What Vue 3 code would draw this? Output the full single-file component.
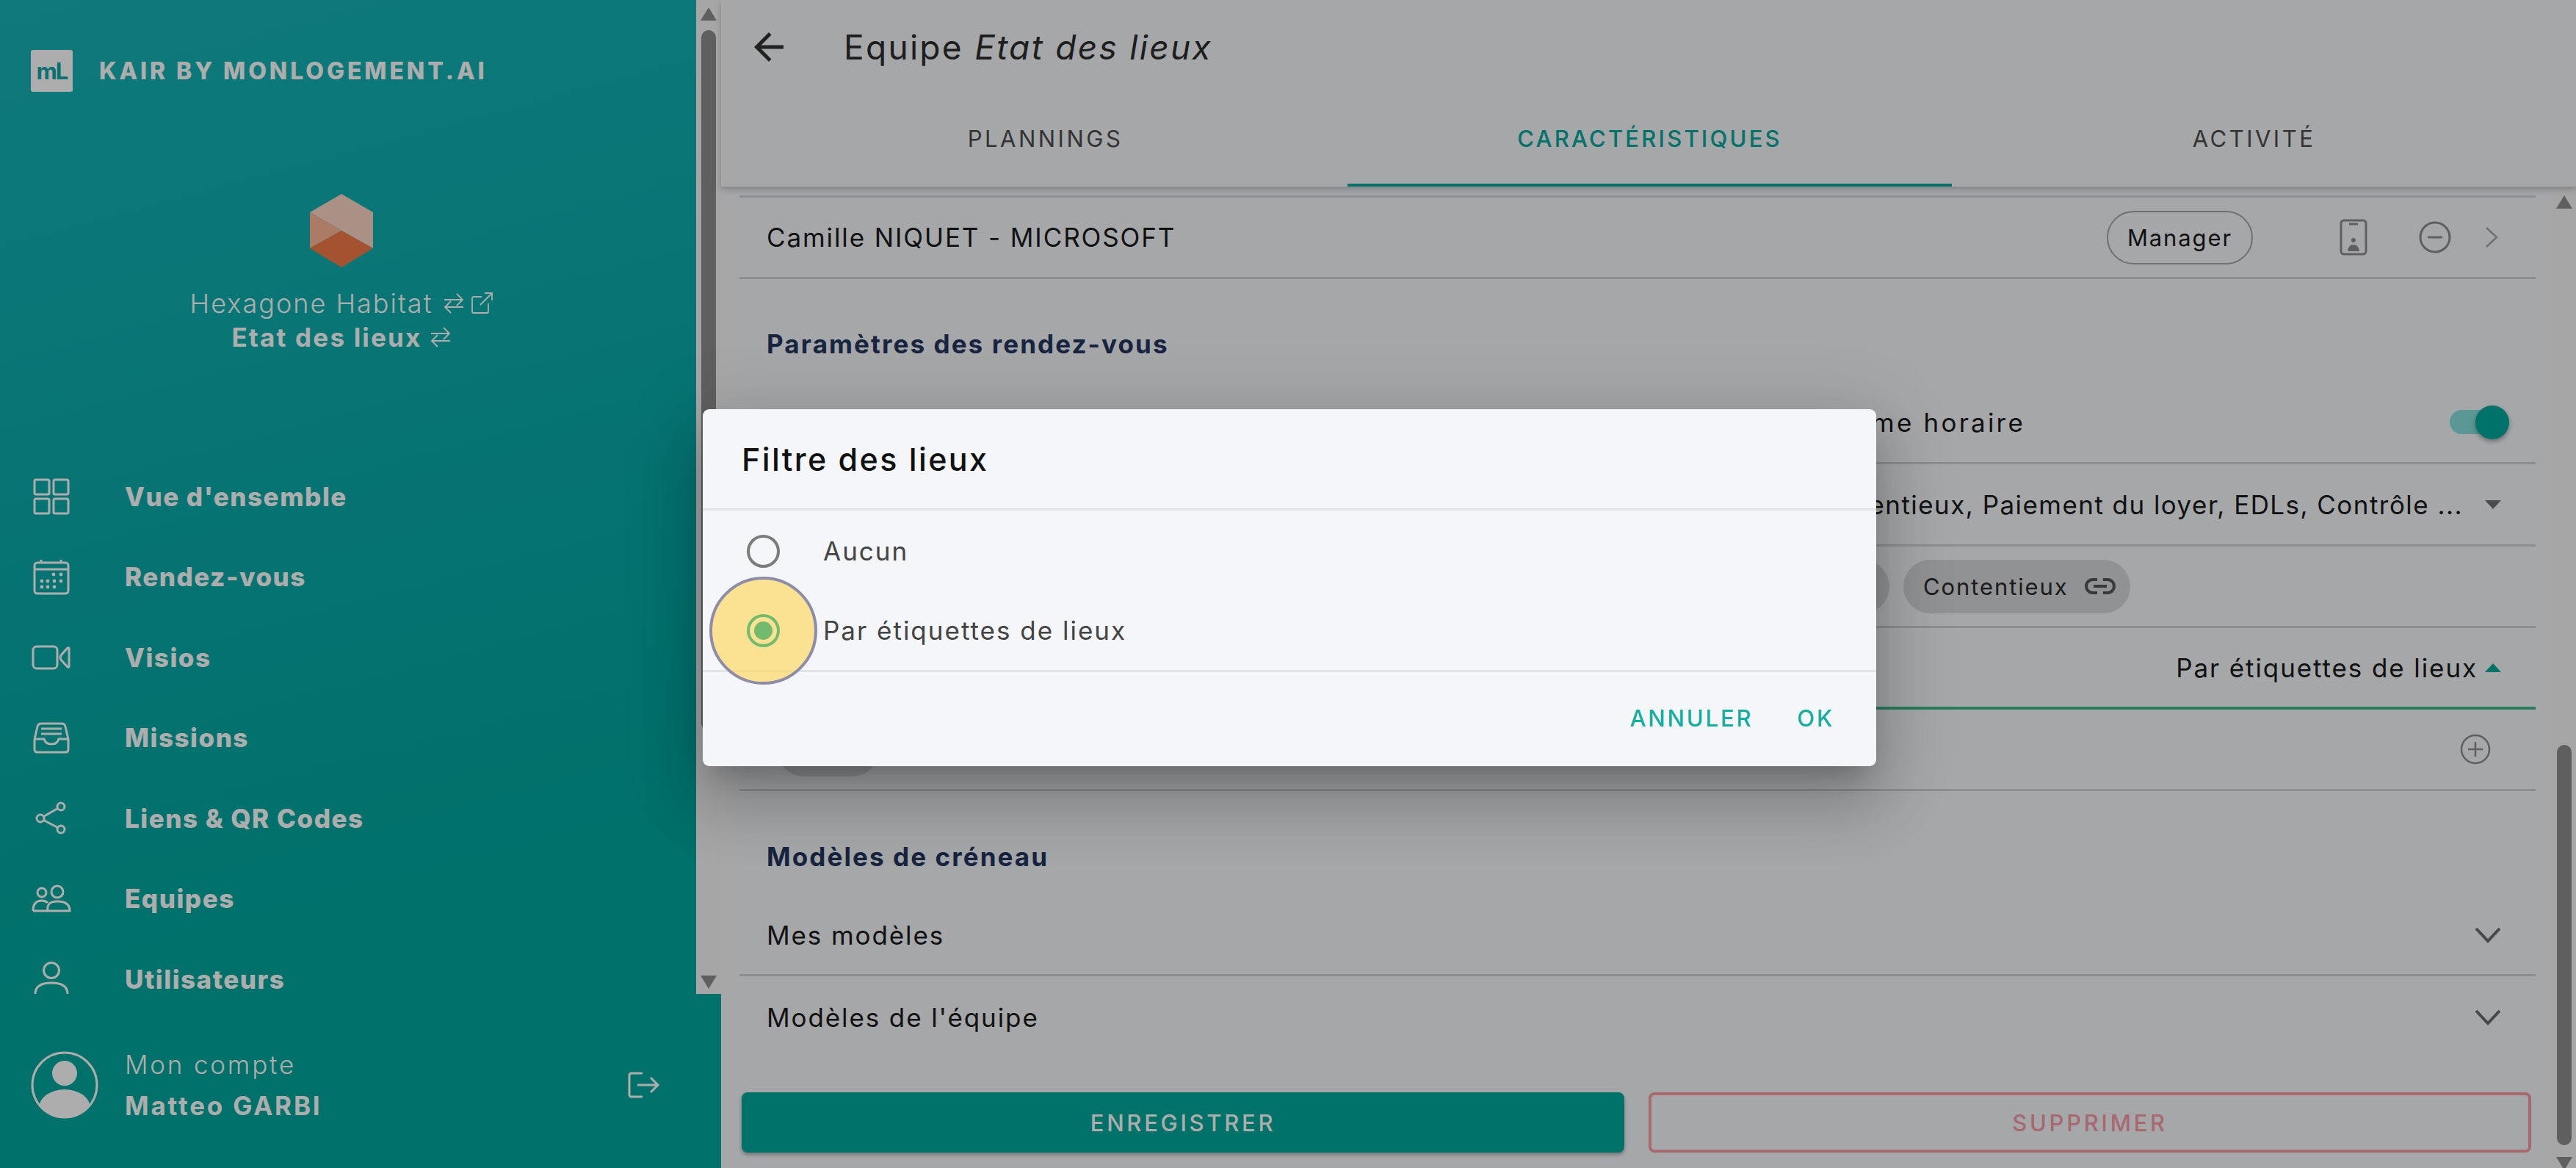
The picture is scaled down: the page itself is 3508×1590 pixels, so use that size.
<script setup>
const navItems = [
  { label: "Vue d'ensemble", icon: "grid" },
  { label: "Rendez-vous", icon: "calendar" },
  { label: "Visios", icon: "video" },
  { label: "Missions", icon: "inbox" },
  { label: "Liens & QR Codes", icon: "share" },
  { label: "Equipes", icon: "team" },
  { label: "Utilisateurs", icon: "user" }
];

const tabs = ["PLANNINGS", "CARACTÉRISTIQUES", "ACTIVITÉ"];

const calendarDots = [
  [31, 25], [41, 25],
  [15, 34], [23, 34], [32, 34], [41, 34],
  [15, 42], [23, 42], [32, 42]
];
</script>

<template>
  <div class="app">
    <aside class="sidebar">
      <div class="side-top">
        <div class="side-content">
          <div class="brand">
            <div class="brand-logo">mL</div>
            <div class="brand-name">KAIR BY MONLOGEMENT.AI</div>
          </div>

          <svg class="hexagon" width="88" height="100" viewBox="0 0 88 100">
            <polygon points="44,0 87,25 87,74 44,50 1,25" fill="#fdd5c5" />
            <polygon points="1,25 44,50 1,74" fill="#fdb697" />
            <polygon points="44,50 87,74 44,100 1,74" fill="#f47a47" />
          </svg>

          <div class="org">
            Hexagone Habitat
            <svg class="swap" width="30" height="30" viewBox="0 0 30 30">
              <path d="M2 10H27M19 2L27 10L19 18M28 20H3M11 12L3 20L11 28" />
            </svg>
            <svg class="swap ext" width="30" height="30" viewBox="0 0 30 30">
              <path d="M15 6H4A2 2 0 0 0 2 8V26A2 2 0 0 0 4 28H22A2 2 0 0 0 24 26V15M13 17L29 1M19 1H29V11" />
            </svg>
          </div>
          <div class="team">
            Etat des lieux
            <svg class="swap" width="30" height="30" viewBox="0 0 30 30">
              <path d="M2 10H27M19 2L27 10L19 18M28 20H3M11 12L3 20L11 28" />
            </svg>
          </div>

          <nav class="nav">
            <div v-for="item in navItems" :key="item.label" class="nav-item">
              <svg class="nav-icon" width="56" height="56" viewBox="0 0 56 56">
                <template v-if="item.icon === 'grid'">
                  <rect x="5" y="5" width="20" height="20" rx="2" />
                  <rect x="31" y="5" width="20" height="20" rx="2" />
                  <rect x="5" y="31" width="20" height="20" rx="2" />
                  <rect x="31" y="31" width="20" height="20" rx="2" />
                </template>
                <template v-else-if="item.icon === 'calendar'">
                  <rect x="5" y="9" width="46" height="42" rx="4" />
                  <path d="M5 18H51M14 5V10M41 5V10" />
                  <circle v-for="d in calendarDots" :key="d.join()" :cx="d[0]" :cy="d[1]" r="2.4" class="dot" />
                </template>
                <template v-else-if="item.icon === 'video'">
                  <rect x="3" y="13" width="33" height="30" rx="5" />
                  <path d="M52 16V40Q52 42 50 41L41 31Q39 28 41 25L50 15Q52 14 52 16Z" />
                </template>
                <template v-else-if="item.icon === 'inbox'">
                  <path d="M5 30V44Q5 48 9 48H47Q51 48 51 44V30M5 30H18Q20 37 28 37Q36 37 38 30H51M5 30L9 13Q10 9 14 9H42Q46 9 47 13L51 30" />
                  <path d="M14 16H42M14 23H42" />
                </template>
                <template v-else-if="item.icon === 'share'">
                  <circle cx="13" cy="28" r="5" />
                  <circle cx="41" cy="12" r="5" />
                  <circle cx="41" cy="43" r="5" />
                  <path d="M17.5 25.5L36.5 14.5M17.5 30.5L36.5 40.5" />
                </template>
                <template v-else-if="item.icon === 'team'">
                  <circle cx="15" cy="20" r="6" />
                  <circle cx="36" cy="19" r="8" />
                  <path d="M3 45Q3 31 15 31Q20 31 23 34M23 45Q21 32 36 32Q53 32 53 45Z" />
                  <path d="M3 45H23" />
                </template>
                <template v-else>
                  <circle cx="28" cy="16" r="10.5" />
                  <path d="M6 48Q6 33 28 33Q50 33 50 48" />
                </template>
              </svg>
              <span>{{ item.label }}</span>
            </div>
          </nav>
        </div>

        <div class="scrollbar side-scroll">
          <div class="arrow-up"></div>
          <div class="thumb side-thumb"></div>
          <div class="spacer"></div>
          <div class="arrow-down"></div>
        </div>
      </div>

      <div class="account">
        <svg class="avatar" width="92" height="92" viewBox="0 0 92 92">
          <defs>
            <clipPath id="avatar-clip"><circle cx="46" cy="46" r="44" /></clipPath>
          </defs>
          <circle cx="46" cy="46" r="44" class="avatar-ring" />
          <circle cx="46" cy="30" r="17" class="avatar-fill" />
          <ellipse cx="46" cy="77" rx="35" ry="25" class="avatar-fill" clip-path="url(#avatar-clip)" />
        </svg>
        <div class="account-text">
          <div class="account-label">Mon compte</div>
          <div class="account-name">Matteo GARBI</div>
        </div>
        <svg class="logout" width="44" height="36" viewBox="0 0 44 36">
          <path d="M20 2H5Q2 2 2 5V31Q2 34 5 34H20M13 18H41M31 8L41 18L31 28" />
        </svg>
      </div>
    </aside>

    <main class="main">
      <header class="header">
        <div class="title-row">
          <svg class="back" width="60" height="60" viewBox="0 0 24 24">
            <path d="M20 11H7.83l5.59-5.59L12 4l-8 8 8 8 1.41-1.41L7.83 13H20v-2z" />
          </svg>
          <h1 class="title">Equipe <em>Etat des lieux</em></h1>
        </div>
        <div class="tabs">
          <div v-for="tab in tabs" :key="tab" class="tab" :class="{ active: tab === 'CARACTÉRISTIQUES' }">{{ tab }}</div>
        </div>
      </header>

      <div class="body">
        <div class="content">
          <div class="row first">
            <span>Camille NIQUET - MICROSOFT</span>
            <span class="role">Manager</span>
            <svg class="phone" width="38" height="50" viewBox="0 0 38 50">
              <rect x="2" y="2" width="34" height="46" rx="4" />
              <path d="M13 7H25" />
              <circle cx="19" cy="29" r="3" class="solid" />
              <path d="M11 44Q12 35 19 35Q26 35 27 44Z" class="solid" />
            </svg>
            <svg class="minus" width="44" height="44" viewBox="0 0 44 44">
              <circle cx="22" cy="22" r="20" />
              <path d="M12 22H32" />
            </svg>
            <svg class="chev-right" width="20" height="30" viewBox="0 0 20 30">
              <path d="M3 2L17 15L3 28" />
            </svg>
          </div>

          <h2 class="section first-section">Paramètres des rendez-vous</h2>

          <div class="row tall">
            <span class="hour-label">Forme horaire</span>
            <div class="toggle"><div class="toggle-thumb"></div></div>
          </div>

          <div class="row tall right">
            <span>Contentieux, Paiement du loyer, EDLs, Contrôle ...</span>
            <span class="caret-down"></span>
          </div>

          <div class="row chips">
            <span class="chip stub"></span>
            <span class="chip">
              Contentieux
              <svg width="44" height="24" viewBox="0 0 44 24">
                <path d="M18 3H12A9 9 0 0 0 12 21H18M26 3H32A9 9 0 0 1 32 21H26M13 12H31" />
              </svg>
            </span>
          </div>

          <div class="row filter">
            <span>Filtre des lieux</span>
            <span class="filter-value">Par étiquettes de lieux</span>
            <span class="caret-up"></span>
          </div>

          <div class="row tags">
            <span class="chip tag-stub"></span>
            <svg class="plus" width="42" height="42" viewBox="0 0 42 42">
              <circle cx="21" cy="21" r="19" />
              <path d="M21 11V31M11 21H31" />
            </svg>
          </div>

          <h2 class="section second-section">Modèles de créneau</h2>

          <div class="row model">
            <span>Mes modèles</span>
            <svg class="chev-down" width="38" height="24" viewBox="0 0 38 24">
              <path d="M3 3L19 20L35 3" />
            </svg>
          </div>
          <div class="row model last">
            <span>Modèles de l'équipe</span>
            <svg class="chev-down" width="38" height="24" viewBox="0 0 38 24">
              <path d="M3 3L19 20L35 3" />
            </svg>
          </div>

          <div class="actions">
            <button class="btn save">ENREGISTRER</button>
            <button class="btn delete">SUPPRIMER</button>
          </div>
        </div>

        <div class="scrollbar main-scroll">
          <div class="arrow-up"></div>
          <div class="spacer main-gap"></div>
          <div class="thumb main-thumb"></div>
          <div class="arrow-down"></div>
        </div>
      </div>
    </main>

    <div class="overlay">
      <div class="dialog">
        <div class="dialog-title">Filtre des lieux</div>
        <div class="dialog-body">
          <div class="option">
            <span class="radio-slot"><span class="radio"></span></span>
            <span>Aucun</span>
          </div>
          <div class="option">
            <span class="radio-slot">
              <span class="highlight"><span class="radio checked"><span class="radio-dot"></span></span></span>
            </span>
            <span>Par étiquettes de lieux</span>
          </div>
        </div>
        <div class="dialog-actions">
          <span>ANNULER</span>
          <span>OK</span>
        </div>
      </div>
    </div>
  </div>
</template>

<style scoped>
.app {
  position: relative;
  display: flex;
  width: 3508px;
  height: 1590px;
  overflow: hidden;
  background: #f4f6fa;
  font-family: Inter, "Liberation Sans", sans-serif;
  font-size: 35px;
  letter-spacing: 1.9px;
  color: #1a1a1a;
}

/* sidebar */
.sidebar {
  width: 982px;
  flex: none;
  display: flex;
  flex-direction: column;
  background: linear-gradient(165deg, #17b3b7 0%, #09aaa8 45%, #00a69d 75%);
  color: #fff;
}

.side-top {
  display: flex;
  height: 1353px;
  flex: none;
}

.side-content {
  flex: 1;
  display: flex;
  flex-direction: column;
  align-items: center;
}

.side-content > * {
  flex: none;
}

.brand {
  align-self: flex-start;
  display: flex;
  align-items: center;
  gap: 36px;
  height: 57px;
  margin: 68px 0 0 42px;
}

.brand-logo {
  width: 57px;
  height: 57px;
  border-radius: 3px;
  background: #fff;
  color: #10a5a8;
  font-weight: 700;
  font-size: 31px;
  letter-spacing: -2px;
  display: flex;
  align-items: center;
  justify-content: center;
}

.brand-name {
  font-weight: 800;
  font-size: 32px;
  letter-spacing: 3.9px;
}

.hexagon {
  margin: 139px 0 0 -18px;
}

.org {
  display: flex;
  align-items: center;
  margin-top: 27px;
  padding-right: 18px;
  height: 44px;
  font-size: 36px;
  font-weight: 300;
  letter-spacing: 2px;
}

.team {
  display: flex;
  align-items: center;
  padding-right: 18px;
  height: 48px;
  font-size: 35px;
  font-weight: 700;
  letter-spacing: 2.2px;
}

.swap {
  margin-left: 14px;
  fill: none;
  stroke: #fff;
  stroke-width: 1.8;
}

.swap.ext {
  margin-left: 8px;
}

.team .swap {
  margin-left: 10px;
}

.nav {
  align-self: stretch;
  margin-top: 138px;
  display: flex;
  flex-direction: column;
}

.nav-item {
  flex: none;
  display: flex;
  align-items: center;
  height: 109.5px;
  padding-left: 42px;
  gap: 72px;
  font-weight: 800;
  font-size: 35px;
  letter-spacing: 1.5px;
}

.nav-icon {
  flex: none;
  fill: none;
  stroke: #fff;
  stroke-width: 3;
}

.nav-icon .dot {
  fill: #fff;
  stroke: none;
}

.account {
  flex: 1;
  display: flex;
  align-items: center;
  padding: 11px 83px 0 42px;
  gap: 36px;
  letter-spacing: 2.8px;
}

.avatar-ring {
  fill: none;
  stroke: #fff;
  stroke-width: 3;
}

.avatar-fill {
  fill: #fff;
}

.account-label {
  font-weight: 300;
  line-height: 56px;
}

.account-name {
  font-weight: 700;
  line-height: 56px;
}

.logout {
  margin-left: auto;
  fill: none;
  stroke: #fff;
  stroke-width: 3;
}

/* scrollbars */
.scrollbar {
  flex: none;
  width: 34px;
  display: flex;
  flex-direction: column;
  align-items: center;
  background: #f5f5f5;
}

.side-scroll {
  padding: 10px 0 7px;
}

.arrow-up,
.arrow-down {
  width: 0;
  height: 0;
  flex: none;
  border-left: 11px solid transparent;
  border-right: 11px solid transparent;
}

.arrow-up {
  border-bottom: 18px solid #8c8c8c;
}

.arrow-down {
  border-top: 18px solid #8c8c8c;
}

.thumb {
  width: 20px;
  flex: none;
  border-radius: 10px;
  background: #8c8c8c;
}

.side-thumb {
  height: 954px;
  margin-top: 13px;
}

.spacer {
  flex: 1;
}

/* main column */
.main {
  flex: 1;
  display: flex;
  flex-direction: column;
  min-width: 0;
}

.header {
  position: relative;
  z-index: 1;
  flex: none;
  box-sizing: border-box;
  height: 255px;
  border-bottom: 1px solid #d4d4d8;
  box-shadow: 0 3px 8px rgba(0, 0, 0, 0.22);
  background: #f4f6fa;
}

.title-row {
  display: flex;
  align-items: center;
  height: 127px;
  padding-left: 35px;
  gap: 72px;
}

.back {
  fill: #333;
}

.title {
  margin: 0;
  font-size: 46px;
  font-weight: 400;
  letter-spacing: 2.3px;
  color: #2d2d2d;
}

.tabs {
  display: flex;
  margin-left: 30px;
  height: 127px;
}

.tab {
  width: 823px;
  display: flex;
  align-items: center;
  justify-content: center;
  font-size: 31px;
  letter-spacing: 3.5px;
  color: #4c4c4c;
  border-bottom: 4px solid transparent;
  box-sizing: border-box;
}

.tab.active {
  color: #00a99d;
  font-weight: 500;
  letter-spacing: 3.2px;
  border-bottom-color: #00a99d;
}

.body {
  flex: 1;
  display: flex;
  min-height: 0;
}

.content {
  flex: 1;
  min-width: 0;
  padding-top: 11px;
}

.row {
  display: flex;
  align-items: center;
  box-sizing: border-box;
  height: 111px;
  margin: 0 22px 0 25px;
  padding-left: 37px;
  border-bottom: 3px solid #d1d1d5;
}

.row.tall {
  height: 112px;
}

.row.first {
  border-top: 3px solid #d1d1d5;
  height: 114px;
  padding-right: 50px;
}

.role {
  margin-left: auto;
  box-sizing: border-box;
  width: 199px;
  height: 73px;
  border: 2px solid #a5a5a8;
  border-radius: 37px;
  display: flex;
  align-items: center;
  justify-content: center;
  font-size: 31px;
}

.phone {
  margin-left: 118px;
  fill: none;
  stroke: #8c8c8c;
  stroke-width: 3;
}

.phone .solid {
  fill: #8c8c8c;
  stroke: none;
}

.minus {
  margin-left: 70px;
  fill: none;
  stroke: #8c8c8c;
  stroke-width: 3;
}

.chev-right {
  margin-left: 45px;
  fill: none;
  stroke: #a5a5a8;
  stroke-width: 2.5;
}

.section {
  margin: 0;
  padding-left: 62px;
  font-size: 35px;
  line-height: 44px;
  font-weight: 700;
  letter-spacing: 2.1px;
  color: #26375f;
}

.first-section {
  padding-top: 66px;
  padding-bottom: 30px;
}

.second-section {
  padding-top: 67px;
  padding-bottom: 31px;
}

.hour-label {
  width: 1714px;
  flex: none;
  text-align: right;
  letter-spacing: 3.2px;
}

.toggle {
  margin-left: auto;
  margin-right: 36px;
  width: 81px;
  height: 33px;
  border-radius: 17px;
  background: #86e0dc;
  display: flex;
  align-items: center;
  justify-content: flex-end;
}

.toggle-thumb {
  width: 46px;
  height: 46px;
  flex: none;
  border-radius: 50%;
  background: #00a99d;
  box-shadow: 0 3px 6px rgba(0, 0, 0, 0.35);
}

.row.right {
  justify-content: flex-end;
  padding-right: 47px;
  white-space: nowrap;
  letter-spacing: 1.45px;
}

.caret-down,
.caret-up {
  width: 0;
  height: 0;
  margin-left: 30px;
  border-left: 11px solid transparent;
  border-right: 11px solid transparent;
}

.caret-down {
  border-top: 12px solid #707070;
}

.caret-up {
  margin-left: 10px;
  border-bottom: 12px solid #00a99d;
}

.chips {
  padding-left: 1266px;
  gap: 19px;
}

.chip {
  height: 73px;
  border-radius: 37px;
  background: #d6d7da;
  display: flex;
  align-items: center;
  box-sizing: border-box;
  padding: 0 19px 0 27px;
  gap: 21px;
  font-size: 31px;
  color: #2a2a2a;
}

.chip svg {
  fill: none;
  stroke: #555;
  stroke-width: 4;
}

.chip.stub {
  width: 300px;
}

.filter {
  border-bottom: 4px solid #3cb88a;
  padding-right: 47px;
}

.filter-value {
  margin-left: auto;
}

.tags {
  padding-left: 51px;
  padding-right: 61px;
}

.chip.tag-stub {
  width: 139px;
}

.plus {
  margin-left: auto;
  fill: none;
  stroke: #8c8c8c;
  stroke-width: 2.5;
}

.model {
  height: 110px;
  padding-right: 46px;
}

.model.last {
  height: 112px;
  border-bottom: 0;
}

.chev-down {
  margin-left: auto;
  fill: none;
  stroke: #6a6a6a;
  stroke-width: 4;
}

.actions {
  display: flex;
  gap: 33px;
  padding: 46px 28px 0;
}

.btn {
  flex: 1;
  height: 82px;
  border-radius: 8px;
  font-family: inherit;
  font-size: 31px;
  font-weight: 500;
  letter-spacing: 3.7px;
}

.save {
  border: 4px solid #00a99d;
  background: #00a99d;
  color: #fff;
  box-shadow: 0 3px 5px rgba(0, 0, 0, 0.3);
}

.delete {
  border: 4px solid #f99aa6;
  background: transparent;
  color: #f99aa6;
}

.main-scroll {
  width: 33px;
  padding: 11px 0 0;
}

.main-gap {
  flex: none;
  height: 730px;
}

.main-thumb {
  height: 545px;
  margin-bottom: 16px;
}

/* dialog */
.overlay {
  position: absolute;
  inset: 0;
  z-index: 5;
  background: rgba(0, 0, 0, 0.32);
}

.dialog {
  position: absolute;
  left: 957px;
  top: 557px;
  width: 1598px;
  height: 486px;
  border-radius: 9px;
  background: #f4f6fa;
  display: flex;
  flex-direction: column;
  box-shadow: 0 24px 33px -15px rgba(0, 0, 0, 0.2), 0 53px 84px 7px rgba(0, 0, 0, 0.14), 0 20px 101px 18px rgba(0, 0, 0, 0.12);
}

.dialog-title {
  box-sizing: border-box;
  height: 138px;
  padding-left: 53px;
  display: flex;
  align-items: center;
  font-size: 43px;
  font-weight: 500;
  letter-spacing: 2.4px;
  color: #111;
  border-bottom: 3px solid #e2e3e6;
}

.dialog-body {
  box-sizing: border-box;
  height: 220px;
  padding-top: 1px;
  border-bottom: 3px solid #e2e3e6;
}

.option {
  display: flex;
  align-items: center;
  height: 108px;
  letter-spacing: 2px;
  color: #444;
}

.radio-slot {
  position: relative;
  width: 164px;
  flex: none;
  display: flex;
  justify-content: center;
}

.radio {
  box-sizing: border-box;
  width: 45px;
  height: 45px;
  border: 4px solid #7c7c7c;
  border-radius: 50%;
  display: flex;
  align-items: center;
  justify-content: center;
}

.radio.checked {
  border-color: #74ba6e;
}

.radio-dot {
  width: 25px;
  height: 25px;
  border-radius: 50%;
  background: #74ba6e;
}

.highlight {
  box-sizing: border-box;
  width: 147px;
  height: 147px;
  margin: -50px 0;
  border: 4px solid #8e8ca8;
  border-radius: 50%;
  background: rgba(255, 213, 79, 0.6);
  display: flex;
  align-items: center;
  justify-content: center;
}

.dialog-actions {
  flex: 1;
  display: flex;
  align-items: center;
  justify-content: flex-end;
  padding: 0 57px 4px 0;
  gap: 60px;
  font-size: 31px;
  font-weight: 500;
  letter-spacing: 2.8px;
  color: #14ad9f;
}
</style>
